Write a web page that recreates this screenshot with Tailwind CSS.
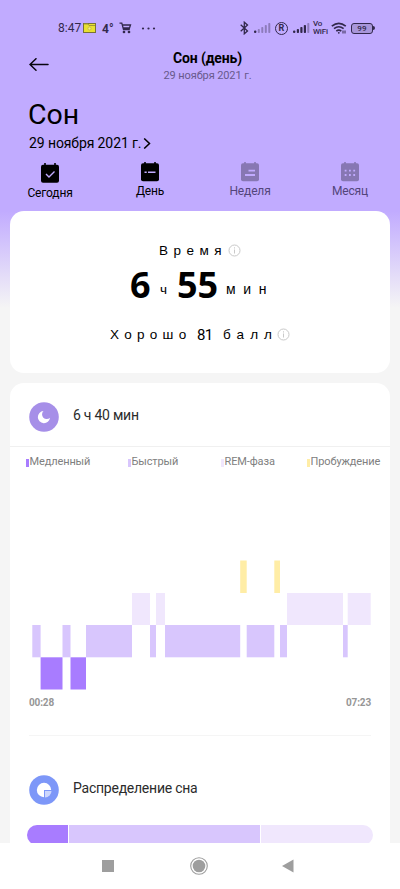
<!DOCTYPE html>
<html lang="ru">
<head>
<meta charset="utf-8">
<title>Сон</title>
<script src="https://cdn.jsdelivr.net/npm/@tailwindcss/browser@4"></script>
</head>
<body class="w-[400px] h-[889px] overflow-hidden bg-[#f5f5f5] font-[Roboto,sans-serif]">
<div class="flex flex-col h-[889px] bg-[linear-gradient(to_bottom,#c1abff_0px,#c1abff_211px,#f5f5f5_308px)]">

  <!-- Status bar -->
  <header class="flex h-[44px] shrink-0 pt-[20px] pl-[58px] text-[#32284c]">
    <span class="w-[25px] shrink-0 text-[12px] leading-[17px] whitespace-nowrap">8:47</span>
    <svg class="mt-[3px] shrink-0" width="13" height="10" viewBox="0 0 13 10"><rect x=".5" y=".5" width="12" height="9" fill="#e8e032" stroke="#787236"/><path d="M1 1h4l1 1.500h6" fill="none" stroke="#a39a35"/><circle cx="6.500" cy="5.500" r="1.500" fill="#f5ef87" stroke="#b5a83c" stroke-width=".6"/></svg>
    <span class="ml-[6px] w-[17px] shrink-0 text-[12px] leading-[18px] font-bold">4°</span>
    <svg class="mt-[2px] shrink-0" width="13" height="12" viewBox="0 0 13 12" fill="none" stroke="#32284c" stroke-width="1.300"><path d="M.5 1.200h2.300l1.700 6.300h6.300M3.300 3h8.200l-1 3H4.200"/><circle cx="5" cy="10" r=".7" fill="#32284c"/><circle cx="10" cy="10" r=".7" fill="#32284c"/></svg>
    <svg class="mt-[7px] ml-[9px] shrink-0" width="15" height="3" viewBox="0 0 15 3" fill="#32284c"><circle cx="2" cy="1.500" r="1.100"/><circle cx="7.500" cy="1.500" r="1.100"/><circle cx="13" cy="1.500" r="1.100"/></svg>
    <svg class="mt-[1px] ml-[84px] shrink-0" width="9" height="14" viewBox="0 0 9 14" fill="none" stroke="#32284c" stroke-width="1.300"><path d="M.7 3.700l6.800 6.200-3.200 2.900V1.200l3.200 2.900-6.800 6.200"/></svg>
    <svg class="mt-[2px] ml-[5px] shrink-0" width="18" height="12" viewBox="0 0 18 12" fill="#8d7bbb"><rect x="0" y="8.500" width="2.400" height="2.500" rx="1" fill="#32284c"/><rect x="3.800" y="7" width="2" height="4" rx=".8"/><rect x="7.300" y="5" width="2" height="6" rx=".8"/><rect x="10.800" y="3" width="2" height="8" rx=".8"/><rect x="14.300" y="1" width="2" height="10" rx=".8"/></svg>
    <span class="mt-[2px] ml-[3px] flex size-[13px] shrink-0 items-center justify-center rounded-full border-[1.300px] border-[#32284c] text-[9px] leading-[9px] font-bold">R</span>
    <svg class="mt-[2px] ml-[5px] shrink-0" width="18" height="12" viewBox="0 0 18 12" fill="#32284c"><rect x="0" y="8.500" width="2.400" height="2.500" rx="1"/><rect x="3.800" y="7" width="2.200" height="4" rx=".8"/><rect x="7.300" y="5" width="2.200" height="6" rx=".8"/><rect x="10.800" y="3" width="2.200" height="8" rx=".8"/><rect x="14.300" y="1" width="2" height="10" rx=".8" fill="#8d7bbb"/></svg>
    <span class="ml-[2px] flex w-[18px] shrink-0 flex-col text-[8px] leading-[8px] tracking-[-.2px] font-medium"><span>Vo</span><span>WiFi</span></span>
    <svg class="mt-[2px] shrink-0" width="17" height="13" viewBox="0 0 17 13" fill="none" stroke="#32284c" stroke-width="1.600"><path d="M.8 4.200q7-5.800 14 0M3 6.700q4.800-3.900 9.600 0M5.300 9.100q2.500-2 5 0"/><circle cx="7.800" cy="10.800" r=".9" fill="#32284c" stroke="none"/><path d="M12 8.500v3M14 8.500v3" stroke-width="1"/></svg>
    <span class="mt-[3px] ml-[3px] flex h-[11px] w-[22px] shrink-0 items-center justify-center rounded-[3px] border border-[#32284c] bg-[#a896da] text-[8px] leading-[8px] tracking-[.3px] font-medium">99</span>
    <span class="mt-[6px] h-[4px] w-[2px] rounded-r-sm bg-[#32284c]"></span>
  </header>

  <!-- Title bar -->
  <div class="grid h-[46px] shrink-0 grid-cols-[50px_1fr_35px]">
    <svg class="mt-[14px] ml-[29px]" width="20" height="14" viewBox="0 0 20 14" fill="none" stroke="#08050f" stroke-width="1.500" stroke-linecap="round"><path d="M1 6.500h18M7 .7L1 6.500l6 5.800"/></svg>
    <div class="pt-[6px] text-center">
      <h2 class="text-[14px] leading-[17px] tracking-[-.15px] font-bold text-black">Сон (день)</h2>
      <p class="text-[11px] leading-[17px] tracking-[-.1px] text-[#68598c]">29 ноября 2021 г.</p>
    </div>
  </div>

  <div class="h-[62px] shrink-0 pl-[28px] text-black">
    <h1 class="pt-[8px] text-[28.500px] leading-[33px] h-[43px]">Сон</h1>
    <div class="flex h-[20px] items-center pl-[1px]">
      <span class="text-[14px] leading-[20px] tracking-[-.1px] whitespace-nowrap">29 ноября 2021 г.</span>
      <svg class="ml-[2px]" width="8" height="11" viewBox="0 0 8 11" fill="none" stroke="#000" stroke-width="1.500"><path d="M1.200 .5l5.300 5-5.300 5"/></svg>
    </div>
  </div>

  <!-- Period tabs -->
  <nav class="grid h-[59px] shrink-0 grid-cols-4 pt-[10px] text-[12px] leading-[15px] tracking-[-.15px] text-black">
    <div class="flex flex-col items-center pt-[1px]">
      <svg width="18" height="20" viewBox="0 0 18 20"><path d="M4 0v4M14 0v4" stroke="#000" stroke-width="1.600"/><rect y="1.800" width="18" height="18" rx="2"/><path d="M5 11l3 3 5.500-5.500" fill="none" stroke="#c1abff" stroke-width="1.400"/></svg>
      <span class="mt-[3px]">Сегодня</span>
    </div>
    <div class="flex flex-col items-center">
      <svg width="18" height="20" viewBox="0 0 18 20"><path d="M4 0v4M14 0v4" stroke="#000" stroke-width="1.600"/><rect y="1.300" width="18" height="18" rx="2"/><path d="M3.500 10.300h2.200M7 10.300h7.500" stroke="#c1abff" stroke-width="1.500"/></svg>
      <span class="mt-[2px]">День</span>
    </div>
    <div class="flex flex-col items-center text-[#53457a]">
      <svg width="18" height="20" viewBox="0 0 18 20"><path d="M4 0v4M14 0v4" stroke="#8777b3" stroke-width="1.600"/><rect y="1.300" width="18" height="18" rx="2" fill="#8777b3"/><path d="M7.500 8.700h6.500M4 13h10" stroke="#c1abff" stroke-width="1.800"/></svg>
      <span class="mt-[2px]">Неделя</span>
    </div>
    <div class="flex flex-col items-center text-[#53457a]">
      <svg width="18" height="20" viewBox="0 0 18 20"><path d="M4 0v4M14 0v4" stroke="#8777b3" stroke-width="1.600"/><rect y="1.300" width="18" height="18" rx="2" fill="#8777b3"/><path d="M3.700 8.700h10.500M3.700 13h10.500" stroke="#c1abff" stroke-width="1.800" stroke-dasharray="1.800 2.500"/></svg>
      <span class="mt-[2px]">Месяц</span>
    </div>
  </nav>

  <!-- Summary -->
  <section class="mx-[10px] h-[162px] shrink-0 rounded-[14px] bg-white pt-[31px] font-['Liberation_Sans',Arial,sans-serif] text-black">
    <div class="flex h-[18px] items-center pl-[149px]">
      <span class="w-[69px] text-[13.500px] leading-[18px] tracking-[5.500px] whitespace-nowrap">Время</span>
      <svg class="-mt-[2px]" width="13" height="13" viewBox="0 0 13 13" fill="none" stroke="#c9c9c9"><circle cx="6.500" cy="6.500" r="5.500"/><path d="M6.500 5.500v4M6.500 3.300v1.200"/></svg>
    </div>
    <div class="flex h-[48px] items-baseline pl-[120px] whitespace-nowrap">
      <span class="w-[30px] font-['Noto_Sans',sans-serif] text-[36px] leading-[50px] font-bold">6</span>
      <span class="w-[17px] text-[13.500px] -translate-y-[4px]">ч</span>
      <span class="w-[49px] font-['Noto_Sans',sans-serif] text-[36px] leading-[50px] font-bold">55</span>
      <span class="text-[14px] tracking-[7.600px] -translate-y-[4px]">мин</span>
    </div>
    <div class="flex h-[18px] mt-[18px] items-center pl-[100px] text-[13.500px] leading-[18px] whitespace-nowrap">
      <span class="w-[87px] tracking-[5.300px]">Хорошо</span>
      <span class="w-[26px] font-[Roboto,sans-serif] text-[15px] tracking-[-.8px]">81</span>
      <span class="w-[54px] tracking-[6.100px]">балл</span>
      <svg class="-mt-[2px]" width="13" height="13" viewBox="0 0 13 13" fill="none" stroke="#c9c9c9"><circle cx="6.500" cy="6.500" r="5.500"/><path d="M6.500 5.500v4M6.500 3.300v1.200"/></svg>
    </div>
  </section>

  <!-- Sleep phases -->
  <section class="mx-[10px] mt-[10px] flex h-[460px] shrink-0 flex-col overflow-hidden rounded-t-[14px] bg-white">
    <div class="flex h-[64px] shrink-0 items-center border-b border-[#f0f0f0] pt-[4px] pl-[19px]">
      <svg width="30" height="30" viewBox="0 0 30 30"><circle cx="15" cy="15" r="14.800" fill="#a68fe8"/><path d="M14.500 9A6.100 6.100 0 1 0 21 15.800A3.900 3.900 0 0 1 14.500 9Z" fill="#fff"/></svg>
      <span class="ml-[14px] -mt-[2px] text-[14px] tracking-[-.24px] text-[#2b2b2b]">6 ч 40 мин</span>
    </div>
    <div class="flex h-[31px] shrink-0 items-center pl-[16px] text-[11px] tracking-[-.12px] text-[#808080] whitespace-nowrap">
      <div class="flex w-[102px] items-center gap-[1px]"><i class="h-[8px] w-[2.500px] bg-[#a87cff]"></i>Медленный</div>
      <div class="flex w-[93px] items-center gap-[1px]"><i class="h-[8px] w-[2.500px] bg-[#d8c6fd]"></i>Быстрый</div>
      <div class="flex w-[86px] items-center gap-[1px]"><i class="h-[8px] w-[2.500px] bg-[#f0e7fd]"></i>REM-фаза</div>
      <div class="flex items-center gap-[1px]"><i class="h-[8px] w-[2.500px] bg-[#ffeda6]"></i>Пробуждение</div>
    </div>
    <svg class="mt-[82px] ml-[19px] shrink-0" width="343" height="130" viewBox="29 560 343 130">
      <g fill="#ffeda6"><rect x="240.200" y="560.500" width="6.500" height="32.500"/><rect x="274.300" y="560.500" width="5.700" height="32.500"/></g>
      <g fill="#f0e7fd"><rect x="132" y="593" width="18" height="32"/><rect x="156" y="593" width="9" height="32"/><rect x="287" y="593" width="56" height="32"/><rect x="347.700" y="593" width="23" height="32"/></g>
      <g fill="#d8c6fd"><rect x="32.300" y="625" width="8.300" height="32.300"/><rect x="62.500" y="625" width="8" height="32.300"/><rect x="86" y="625" width="46" height="32.300"/><rect x="150" y="625" width="6" height="32.300"/><rect x="165" y="625" width="75.200" height="32.300"/><rect x="246.700" y="625" width="27.600" height="32.300"/><rect x="280" y="625" width="7" height="32.300"/><rect x="343" y="625" width="4.700" height="32.300"/></g>
      <g fill="#a87cff"><rect x="40.600" y="657.300" width="21.900" height="32.200"/><rect x="70.500" y="657.300" width="15.500" height="32.200"/></g>
    </svg>
    <div class="mx-[19px] flex h-[46px] shrink-0 justify-between border-b-[1.500px] border-[#f5f5f5] pt-[5px] text-[10px] leading-[15px] tracking-[-.15px] font-bold text-[#969696]"><span>00:28</span><span>07:23</span></div>
    <div class="flex h-[89px] shrink-0 items-center pt-[19px] pl-[19px]">
      <svg width="30" height="30" viewBox="0 0 30 30"><circle cx="15" cy="15" r="14.800" fill="#7d97f8"/><circle cx="15" cy="15" r="7.200" fill="#fff"/><path d="M15 15h8v8h-8z" fill="#7d97f8"/><path d="M16 16h6.500a6.500 6.500 0 0 1-6.500 6.500z" fill="#ccd6fd"/></svg>
      <span class="ml-[14px] -mt-[3px] text-[14px] tracking-[-.24px] text-[#2b2b2b]">Распределение сна</span>
    </div>
    <div class="mx-[17px] flex h-[20px] shrink-0 gap-[1px] overflow-hidden rounded-[10px]">
      <div class="w-[41px] bg-[#a87cff]"></div>
      <div class="w-[191px] bg-[#d8c6fd]"></div>
      <div class="flex-1 bg-[#f0e7fd]"></div>
    </div>
  </section>

  <!-- System navigation -->
  <footer class="flex flex-1 items-center bg-white pl-[102px]">
    <div class="size-[12px] bg-[#9e9e9e]"></div>
    <svg class="ml-[76px]" width="18" height="18" viewBox="0 0 18 18"><circle cx="9" cy="9" r="8.300" fill="none" stroke="#9e9e9e" stroke-width="1.100"/><circle cx="9" cy="9" r="6.300" fill="#9e9e9e"/></svg>
    <svg class="ml-[74px]" width="12" height="14" viewBox="0 0 12 14"><path d="M0 7L11.500 .5v13z" fill="#9e9e9e"/></svg>
  </footer>
</div>
</body>
</html>
